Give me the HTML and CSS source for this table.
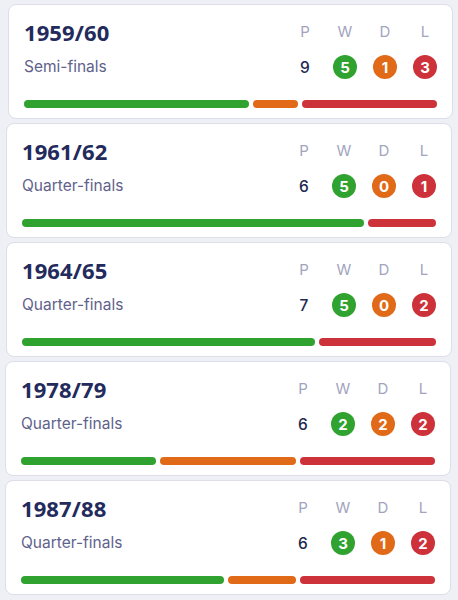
FILE: index.html
```html
<!DOCTYPE html>
<html lang="en">
<head>
<meta charset="utf-8">
<title>Seasons</title>
<link rel="stylesheet" href="styles.css">
</head>
<body>
<main class="list">
  <section class="card card--a">
    <div class="top">
      <h2 class="year">1959/60</h2>
      <span class="hd">P</span><span class="hd">W</span><span class="hd">D</span><span class="hd">L</span>
      <p class="stage">Semi-finals</p>
      <span class="played">9</span><span class="dot win">5</span><span class="dot draw">1</span><span class="dot loss">3</span>
    </div>
    <div class="bar">
      <span class="seg win" style="flex-grow:5"></span><span class="seg draw" style="flex-grow:1"></span><span class="seg loss" style="flex-grow:3"></span>
    </div>
  </section>
  <section class="card card--b">
    <div class="top">
      <h2 class="year">1961/62</h2>
      <span class="hd">P</span><span class="hd">W</span><span class="hd">D</span><span class="hd">L</span>
      <p class="stage">Quarter-finals</p>
      <span class="played">6</span><span class="dot win">5</span><span class="dot draw">0</span><span class="dot loss">1</span>
    </div>
    <div class="bar">
      <span class="seg win" style="flex-grow:5"></span><span class="seg loss" style="flex-grow:1"></span>
    </div>
  </section>
  <section class="card card--b">
    <div class="top">
      <h2 class="year">1964/65</h2>
      <span class="hd">P</span><span class="hd">W</span><span class="hd">D</span><span class="hd">L</span>
      <p class="stage">Quarter-finals</p>
      <span class="played">7</span><span class="dot win">5</span><span class="dot draw">0</span><span class="dot loss">2</span>
    </div>
    <div class="bar">
      <span class="seg win" style="flex-grow:5"></span><span class="seg loss" style="flex-grow:2"></span>
    </div>
  </section>
  <section class="card card--c">
    <div class="top">
      <h2 class="year">1978/79</h2>
      <span class="hd">P</span><span class="hd">W</span><span class="hd">D</span><span class="hd">L</span>
      <p class="stage">Quarter-finals</p>
      <span class="played">6</span><span class="dot win">2</span><span class="dot draw">2</span><span class="dot loss">2</span>
    </div>
    <div class="bar">
      <span class="seg win" style="flex-grow:2"></span><span class="seg draw" style="flex-grow:2"></span><span class="seg loss" style="flex-grow:2"></span>
    </div>
  </section>
  <section class="card card--c">
    <div class="top">
      <h2 class="year">1987/88</h2>
      <span class="hd">P</span><span class="hd">W</span><span class="hd">D</span><span class="hd">L</span>
      <p class="stage">Quarter-finals</p>
      <span class="played">6</span><span class="dot win">3</span><span class="dot draw">1</span><span class="dot loss">2</span>
    </div>
    <div class="bar">
      <span class="seg win" style="flex-grow:3"></span><span class="seg draw" style="flex-grow:1"></span><span class="seg loss" style="flex-grow:2"></span>
    </div>
  </section>
</main>
</body>
</html>
```
FILE: styles.css
```css
html, body {
  margin: 0;
  padding: 0;
  background: #eef0f6;
}
body {
  font-family: Inter, "Noto Sans", sans-serif;
  width: 458px;
  height: 600px;
  overflow: hidden;
}
.list {
  display: flex;
  flex-direction: column;
  gap: 4px;
  padding-top: 4px;
}
.card {
  background: #ffffff;
  border: 1px solid #dcdee9;
  border-radius: 8px;
  padding: 12px 15px 10px 15px;
}
.card--a { margin: 0 5px 0 8px; }
.card--b { margin: 0 6px 0 6px; }
.card--c { margin: 0 7px 0 5px; }
.top {
  display: grid;
  grid-template-columns: 1fr 24px 24px 24px 24px;
  grid-template-rows: 30px 28px;
  column-gap: 16px;
  row-gap: 6px;
  align-items: center;
}
.year {
  margin: 0;
  font-family: "Noto Sans", sans-serif;
  font-weight: 700;
  font-size: 22px;
  line-height: 30px;
  color: #232a5c;
  letter-spacing: 0.1px;
}
.hd {
  text-align: center;
  font-size: 15px;
  color: #a2a4be;
  line-height: 30px;
}
.stage {
  margin: 0;
  font-size: 15.5px;
  color: #5f628b;
  line-height: 28px;
}
.played {
  text-align: center;
  font-size: 15.5px;
  font-weight: 500;
  color: #22284f;
}
.dot {
  width: 24px;
  height: 24px;
  border-radius: 50%;
  color: #ffffff;
  font-weight: 700;
  font-size: 15px;
  display: flex;
  align-items: center;
  justify-content: center;
  justify-self: center;
}
.bar {
  display: flex;
  gap: 4px;
  margin-top: 19px;
  height: 8px;
}
.seg {
  flex-basis: 0;
  border-radius: 4px;
}
.win { background: #2fa22f; }
.draw { background: #e06a17; }
.loss { background: #cd313a; }
```
